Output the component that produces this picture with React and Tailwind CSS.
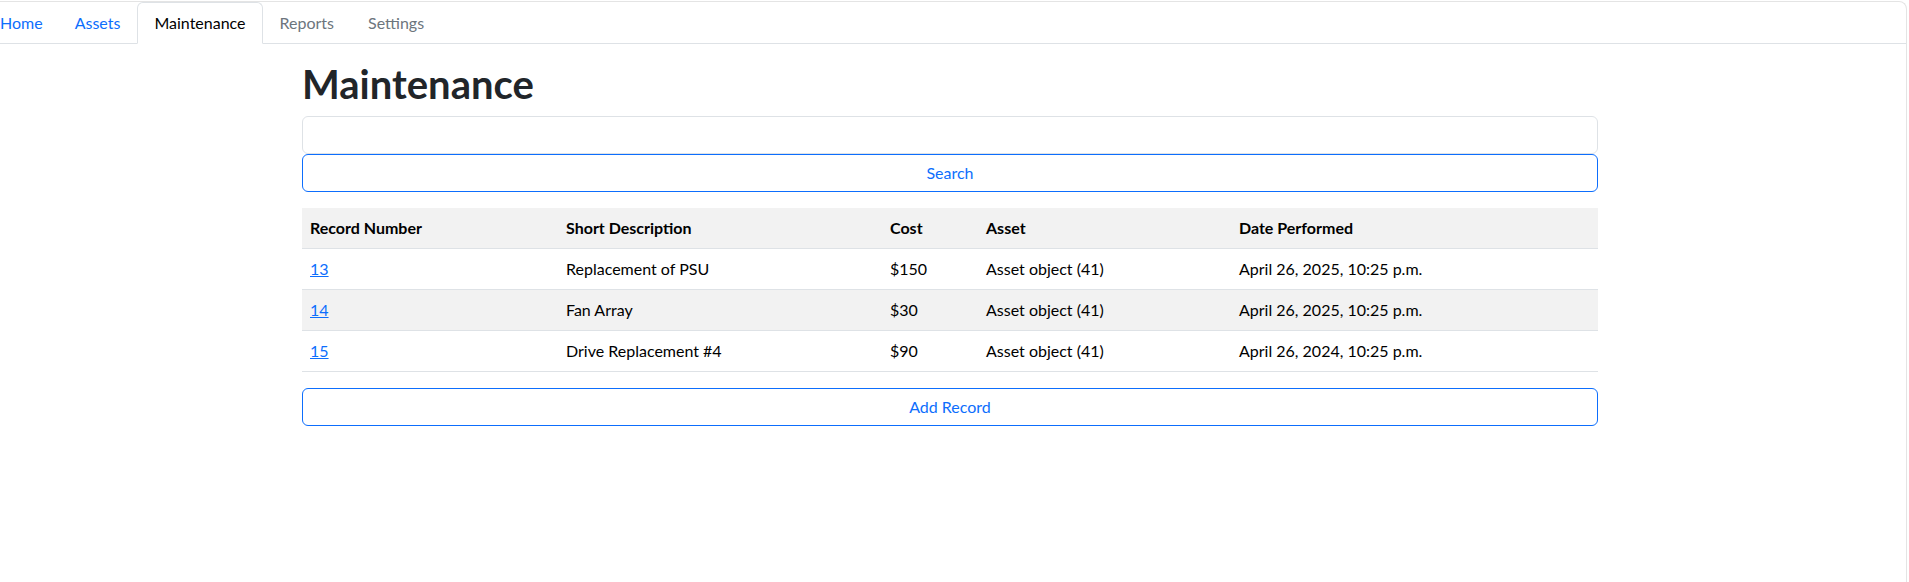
export default function App() {
  const rows = [
    { n: "13", d: "Replacement of PSU", c: "$150", a: "Asset object (41)", t: "April 26, 2025, 10:25 p.m.", s: false },
    { n: "14", d: "Fan Array", c: "$30", a: "Asset object (41)", t: "April 26, 2025, 10:25 p.m.", s: true },
    { n: "15", d: "Drive Replacement #4", c: "$90", a: "Asset object (41)", t: "April 26, 2024, 10:25 p.m.", s: false },
  ];
  const tabs = [
    { l: "Home", k: "link" },
    { l: "Assets", k: "link" },
    { l: "Maintenance", k: "active" },
    { l: "Reports", k: "off" },
    { l: "Settings", k: "off" },
  ];
  return (
    <div className="bg-white pt-px w-[1909px] h-[582px] overflow-hidden font-['Segoe_UI','Lato',sans-serif] text-base text-[#212529]">
      <div className="h-[581px] mr-[2px] border-t border-r border-[#e4e4e4] rounded-tr-lg overflow-hidden">
        <ul className="flex border-b border-[#dee2e6] pl-0">
          <div className="flex ml-[-17px]">
            {tabs.map((t, i) => (
              <li key={t.l} className="-mb-px">
                <a
                  className={
                    "block py-2 leading-6 border rounded-t-md " +
                    (i === 0 ? "pl-4 pr-[15px] " : i === 1 ? "pl-[15px] pr-4 " : "px-4 ") +
                    (t.k === "active"
                      ? "border-[#dee2e6] border-b-white bg-white text-black"
                      : t.k === "link"
                      ? "border-transparent text-[#0d6efd]"
                      : "border-transparent text-[#6c757d]")
                  }
                >
                  {t.l}
                </a>
              </li>
            ))}
          </div>
        </ul>
        <div className="ml-[302px] w-[1296px] mt-4">
          <h1 className="text-[40px] font-bold leading-[48px] mb-2 text-[#212529]">Maintenance</h1>
          <input className="block w-full h-[38px] border border-[#dee2e6] rounded-md px-3" />
          <button className="block w-full h-[38px] border border-[#0d6efd] text-[#0d6efd] rounded-md mb-4 bg-white">
            Search
          </button>
          <table className="w-full border-collapse mb-4 text-black table-fixed">
            <thead>
              <tr className="bg-[#f2f2f2] border-b border-[#dee2e6]">
                <th className="w-[256px] text-left font-bold px-2 py-2 leading-6">Record Number</th>
                <th className="w-[324px] text-left font-bold px-2 py-2 leading-6">Short Description</th>
                <th className="w-[96px] text-left font-bold px-2 py-2 leading-6">Cost</th>
                <th className="w-[253px] text-left font-bold px-2 py-2 leading-6">Asset</th>
                <th className="text-left font-bold px-2 py-2 leading-6">Date Performed</th>
              </tr>
            </thead>
            <tbody>
              {rows.map((r) => (
                <tr key={r.n} className={"border-b border-[#dee2e6] " + (r.s ? "bg-[#f2f2f2]" : "bg-white")}>
                  <td className="px-2 py-2 leading-6">
                    <a className="text-[#0d6efd] underline">{r.n}</a>
                  </td>
                  <td className="px-2 py-2 leading-6">{r.d}</td>
                  <td className="px-2 py-2 leading-6">{r.c}</td>
                  <td className="px-2 py-2 leading-6">{r.a}</td>
                  <td className="px-2 py-2 leading-6">{r.t}</td>
                </tr>
              ))}
            </tbody>
          </table>
          <button className="block w-full h-[38px] border border-[#0d6efd] text-[#0d6efd] rounded-md bg-white">
            Add Record
          </button>
        </div>
      </div>
    </div>
  );
}
